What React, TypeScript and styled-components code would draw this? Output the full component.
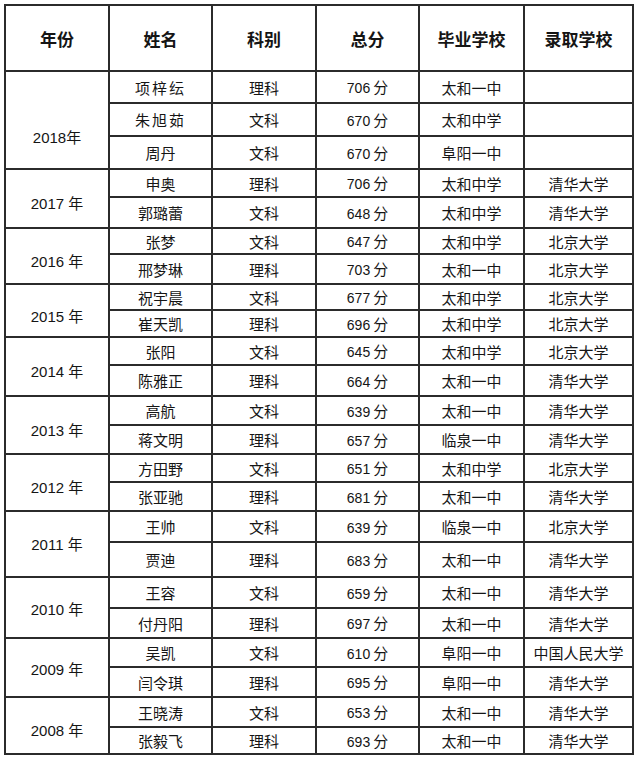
import styled, {createGlobalStyle} from "styled-components";

const LINE_COLOR = "#2b2b2b";
const TEXT_COLOR = "#151515";

const GlobalStyle = createGlobalStyle`
    html, body {
        margin: 0;
        padding: 0;
        background: #ffffff;
    }
    body {
        font-family: "Noto Sans CJK SC", "Noto Sans", sans-serif;
        color: ${TEXT_COLOR};
    }
`;

const Page = styled.div`
    width: 640px;
    height: 761px;
    padding: 4px 0 0 4px;
    box-sizing: border-box;
    overflow: hidden;
`;

const Table = styled.table`
    border-collapse: collapse;
    table-layout: fixed;
    width: 630px;
    border: 2px solid ${LINE_COLOR};
`;

const HeadRow = styled.tr`
    height: 66px;
`;

const Row = styled.tr<{$h: number}>`
    height: ${props => props.$h}px;
`;

const HeadCell = styled.th`
    border: 2px solid ${LINE_COLOR};
    font-size: 17px;
    font-weight: 700;
    padding: 0;
    text-align: center;
    vertical-align: middle;
    line-height: 1;
`;

const Cell = styled.td<{$spaced?: boolean}>`
    border: 2px solid ${LINE_COLOR};
    font-size: 15px;
    padding: 0;
    text-align: center;
    vertical-align: middle;
    line-height: 1;
    white-space: nowrap;
    letter-spacing: ${props => (props.$spaced ? "2px" : "0")};
`;

const YearCell = styled(Cell)<{$drop: number}>`
    padding-top: ${props => props.$drop}px;
    font-family: "Liberation Sans", "Noto Sans CJK SC", sans-serif;
`;

const Score = styled.span`
    font-family: "Liberation Sans", "Noto Sans CJK SC", sans-serif;
    font-size: 14px;
`;

const Unit = styled.span`
    font-family: "Noto Sans CJK SC", sans-serif;
    font-size: 15px;
    margin-left: 3px;
`;

interface Student {
    name: string;
    track: string;
    score: number;
    school: string;
    admitted: string;
    h: number;
}

interface YearGroup {
    year: string;
    drop: number;
    students: Student[];
}

const groups: YearGroup[] = [
    {
        year: "2018年",
        drop: 34,
        students: [
            {name: "项梓纭", track: "理科", score: 706, school: "太和一中", admitted: "", h: 32},
            {name: "朱旭茹", track: "文科", score: 670, school: "太和中学", admitted: "", h: 33},
            {name: "周丹", track: "文科", score: 670, school: "阜阳一中", admitted: "", h: 33},
        ],
    },
    {
        year: "2017 年",
        drop: 10,
        students: [
            {name: "申奥", track: "理科", score: 706, school: "太和中学", admitted: "清华大学", h: 28},
            {name: "郭璐蕾", track: "文科", score: 648, school: "太和中学", admitted: "清华大学", h: 31},
        ],
    },
    {
        year: "2016 年",
        drop: 10,
        students: [
            {name: "张梦", track: "文科", score: 647, school: "太和中学", admitted: "北京大学", h: 26},
            {name: "邢梦琳", track: "理科", score: 703, school: "太和一中", admitted: "北京大学", h: 30},
        ],
    },
    {
        year: "2015 年",
        drop: 12,
        students: [
            {name: "祝宇晨", track: "文科", score: 677, school: "太和中学", admitted: "北京大学", h: 26},
            {name: "崔天凯", track: "理科", score: 696, school: "太和中学", admitted: "北京大学", h: 27},
        ],
    },
    {
        year: "2014 年",
        drop: 10,
        students: [
            {name: "张阳", track: "文科", score: 645, school: "太和中学", admitted: "北京大学", h: 28},
            {name: "陈雅正", track: "理科", score: 664, school: "太和一中", admitted: "清华大学", h: 31},
        ],
    },
    {
        year: "2013 年",
        drop: 10,
        students: [
            {name: "高航", track: "文科", score: 639, school: "太和一中", admitted: "清华大学", h: 29},
            {name: "蒋文明", track: "理科", score: 657, school: "临泉一中", admitted: "清华大学", h: 29},
        ],
    },
    {
        year: "2012 年",
        drop: 10,
        students: [
            {name: "方田野", track: "文科", score: 651, school: "太和中学", admitted: "北京大学", h: 28},
            {name: "张亚驰", track: "理科", score: 681, school: "太和一中", admitted: "清华大学", h: 29},
        ],
    },
    {
        year: "2011 年",
        drop: 0,
        students: [
            {name: "王帅", track: "文科", score: 639, school: "临泉一中", admitted: "北京大学", h: 31},
            {name: "贾迪", track: "理科", score: 683, school: "太和一中", admitted: "清华大学", h: 35},
        ],
    },
    {
        year: "2010 年",
        drop: 4,
        students: [
            {name: "王容", track: "文科", score: 659, school: "太和一中", admitted: "清华大学", h: 31},
            {name: "付丹阳", track: "理科", score: 697, school: "太和一中", admitted: "清华大学", h: 30},
        ],
    },
    {
        year: "2009 年",
        drop: 4,
        students: [
            {name: "吴凯", track: "文科", score: 610, school: "阜阳一中", admitted: "中国人民大学", h: 29},
            {name: "闫令琪", track: "理科", score: 695, school: "阜阳一中", admitted: "清华大学", h: 30},
        ],
    },
    {
        year: "2008 年",
        drop: 10,
        students: [
            {name: "王晓涛", track: "文科", score: 653, school: "太和一中", admitted: "清华大学", h: 30},
            {name: "张毅飞", track: "理科", score: 693, school: "太和一中", admitted: "清华大学", h: 27},
        ],
    },
];

export default function App() {
    return (
        <Page>
            <GlobalStyle />
            <Table>
                <colgroup>
                    <col style={{width: 104}} />
                    <col style={{width: 103}} />
                    <col style={{width: 104}} />
                    <col style={{width: 103}} />
                    <col style={{width: 105}} />
                    <col style={{width: 109}} />
                </colgroup>
                <thead>
                    <HeadRow>
                        <HeadCell>年份</HeadCell>
                        <HeadCell>姓名</HeadCell>
                        <HeadCell>科别</HeadCell>
                        <HeadCell>总分</HeadCell>
                        <HeadCell>毕业学校</HeadCell>
                        <HeadCell>录取学校</HeadCell>
                    </HeadRow>
                </thead>
                <tbody>
                    {groups.map(group =>
                        group.students.map((s, index) => (
                            <Row $h={s.h} key={`${group.year}-${s.name}`}>
                                {index === 0 && (
                                    <YearCell rowSpan={group.students.length} $drop={group.drop}>
                                        {group.year}
                                    </YearCell>
                                )}
                                <Cell $spaced={group.year === "2018年" && s.name.length === 3}>{s.name}</Cell>
                                <Cell>{s.track}</Cell>
                                <Cell>
                                    <Score>{s.score}</Score>
                                    <Unit>分</Unit>
                                </Cell>
                                <Cell>{s.school}</Cell>
                                <Cell>{s.admitted}</Cell>
                            </Row>
                        ))
                    )}
                </tbody>
            </Table>
        </Page>
    );
}
